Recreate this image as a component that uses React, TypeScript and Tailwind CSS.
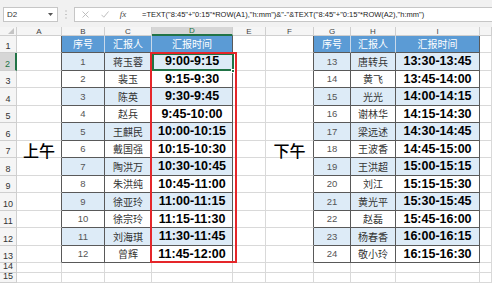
import React from "react";

const left: [string, string, string][] = [
  ["1", "蒋玉蓉", "9:00-9:15"],
  ["2", "裴玉", "9:15-9:30"],
  ["3", "陈英", "9:30-9:45"],
  ["4", "赵兵", "9:45-10:00"],
  ["5", "王麒民", "10:00-10:15"],
  ["6", "戴国强", "10:15-10:30"],
  ["7", "陶洪万", "10:30-10:45"],
  ["8", "朱洪纯", "10:45-11:00"],
  ["9", "徐亚玲", "11:00-11:15"],
  ["10", "徐宗玲", "11:15-11:30"],
  ["11", "刘海琪", "11:30-11:45"],
  ["12", "曾辉", "11:45-12:00"],
];

const right: [string, string, string][] = [
  ["13", "唐转兵", "13:30-13:45"],
  ["14", "黄飞", "13:45-14:00"],
  ["15", "光光", "14:00-14:15"],
  ["16", "谢林华", "14:15-14:30"],
  ["17", "梁远述", "14:30-14:45"],
  ["18", "王波香", "14:45-15:00"],
  ["19", "王洪超", "15:00-15:15"],
  ["20", "刘江", "15:15-15:30"],
  ["21", "黄光平", "15:30-15:45"],
  ["22", "赵磊", "15:45-16:00"],
  ["23", "杨春香", "16:00-16:15"],
  ["24", "敬小玲", "16:15-16:30"],
];

const COLS = ["A", "B", "C", "D", "E", "F", "G", "H", "I", "J"];

const cjk = "font-['Noto_Sans_CJK_SC',sans-serif]";

function Toolbar() {
  return (
    <div className="h-[27px] bg-[#f1f1f1] flex items-start pt-[7px]">
      <div className="ml-[3px] w-[55px] h-[15px] bg-white border border-[#c6c6c6] flex items-center pl-[3px] pr-[4px] text-[8px] text-[#333] leading-none">
        <span>D2</span>
        <svg className="ml-auto" width="5" height="3" viewBox="0 0 5 3">
          <path d="M0 0 L5 0 L2.5 3 Z" fill="#555" />
        </svg>
      </div>
      <div className="w-[16px] h-[15px] flex items-center justify-center">
        <svg width="2" height="9" viewBox="0 0 2 9">
          <rect x="0.5" y="0.5" width="1" height="1" fill="#999" />
          <rect x="0.5" y="4" width="1" height="1" fill="#999" />
          <rect x="0.5" y="7.5" width="1" height="1" fill="#999" />
        </svg>
      </div>
      <div className="flex-1 h-[15px] bg-white border-y border-l border-[#c6c6c6] flex items-center">
        <span className="w-[20px] flex justify-center">
          <svg width="7" height="7" viewBox="0 0 7 7">
            <path d="M0.5 0.5 L6.5 6.5 M6.5 0.5 L0.5 6.5" stroke="#b8b8b8" strokeWidth="0.9" />
          </svg>
        </span>
        <span className="w-[19px] flex justify-center">
          <svg width="8" height="7" viewBox="0 0 8 7">
            <path d="M0.5 3.8 L2.8 6.2 L7.5 0.5" stroke="#b8b8b8" strokeWidth="0.9" fill="none" />
          </svg>
        </span>
        <span className="w-[18px] flex justify-center font-['Liberation_Serif',serif] italic text-[9px] text-[#444] leading-none">
          fx
        </span>
        <span className="ml-[10px] text-[7.5px] text-[#222] leading-none whitespace-nowrap">
          {'=TEXT("8:45"+"0:15"*ROW(A1),"h:mm")&"-"&TEXT("8:45"+"0:15"*ROW(A2),"h:mm")'}
        </span>
      </div>
    </div>
  );
}

function Sheet() {
  const cells: React.ReactNode[] = [];

  cells.push(
    <div key="corner" className="bg-[#f5f5f5] border-r border-b border-[#cfcfcf] flex items-end justify-end pr-[2px] pb-[1px]">
      <svg width="6" height="6" viewBox="0 0 6 6">
        <path d="M6 0 L6 6 L0 6 Z" fill="#c4c4c4" />
      </svg>
    </div>
  );
  COLS.forEach((c) => {
    const sel = c === "D";
    cells.push(
      <div
        key={"h" + c}
        className={
          sel
            ? "bg-[#d6d6d6] border-r border-[#cfcfcf] border-b-2 border-b-[#217346] text-[#217346] text-[8px] leading-none flex items-center justify-center pt-[1px]"
            : "bg-[#f5f5f5] border-r border-b border-[#cfcfcf] text-[#444] text-[8px] leading-none flex items-center justify-center pt-[1px]"
        }
      >
        {c === "J" ? "" : c}
      </div>
    );
  });

  for (let r = 1; r <= 15; r++) {
    const sel = r === 2;
    cells.push(
      <div
        key={"rh" + r}
        className={
          sel
            ? "bg-[#d6d6d6] border-b border-[#cfcfcf] border-r-2 border-r-[#217346] text-[#217346] text-[9px] leading-none flex items-end justify-center pb-[1px]"
            : "bg-[#f5f5f5] border-r border-b border-[#cfcfcf] text-[#333] text-[9px] leading-none flex items-end justify-center pb-[1px]"
        }
      >
        {r}
      </div>
    );

    const inTable = r >= 1 && r <= 13;
    const gridCell = "border-r border-b border-[#d9d9d9] flex items-center justify-center whitespace-nowrap overflow-visible";
    const beforeTable = "border-r border-b border-[#d9d9d9] border-r-[#595959] flex items-center justify-center whitespace-nowrap overflow-visible";

    cells.push(
      <div key={"A" + r} className={inTable ? beforeTable : gridCell}>
        {r === 7 ? <span className={cjk + " text-[16px] font-medium text-black leading-none mt-[2px]"}>上午</span> : null}
      </div>
    );

    const table = (data: [string, string, string][], side: string) => {
      const out: React.ReactNode[] = [];
      if (r === 1) {
        const hs = ["序号", "汇报人", "汇报时间"];
        hs.forEach((h, i) => {
          out.push(
            <div
              key={side + "hd" + i}
              className={
                i === 2
                  ? cjk + " bg-[#5b9bd5] text-white text-[10px] leading-none flex items-center justify-center border-r border-b border-[#595959]"
                  : cjk + " bg-[#5b9bd5] text-white text-[10px] leading-none flex items-center justify-center border-r border-b border-[#595959] border-r-[#c9d9ea]"
              }
            >
              {h}
            </div>
          );
        });
      } else if (r <= 13) {
        const row = data[r - 2];
        const stripe = r % 2 === 0;
        const bg = stripe ? "bg-[#ddebf7]" : "bg-white";
        out.push(
          <div key={side + "n" + r} className={bg + " border-r border-b border-[#595959] flex items-center justify-center text-[9.5px] text-[#555] leading-none"}>
            {row[0]}
          </div>
        );
        out.push(
          <div key={side + "m" + r} className={bg + " " + cjk + " border-r border-b border-[#595959] flex items-center justify-center text-[10px] text-[#333] leading-none"}>
            {row[1]}
          </div>
        );
        out.push(
          <div key={side + "t" + r} className={bg + " border-r border-b border-[#595959] flex items-center justify-center text-[12.5px] font-bold text-black leading-none whitespace-nowrap"}>
            {row[2]}
          </div>
        );
      } else {
        out.push(<div key={side + "e1" + r} className={gridCell} />);
        out.push(<div key={side + "e2" + r} className={gridCell} />);
        out.push(<div key={side + "e3" + r} className={gridCell} />);
      }
      return out;
    };

    cells.push(...table(left, "L"));
    cells.push(<div key={"E" + r} className={gridCell} />);
    cells.push(
      <div key={"F" + r} className={inTable ? beforeTable : gridCell}>
        {r === 7 ? <span className={cjk + " text-[16px] font-medium text-black leading-none mt-[2px]"}>下午</span> : null}
      </div>
    );
    cells.push(...table(right, "R"));
    cells.push(<div key={"J" + r} className={gridCell} />);
  }

  return (
    <div className="relative">
      <div className="grid grid-cols-[17px_45px_43px_47px_81px_33px_48px_37px_45px_84px_1fr] grid-rows-[9px_17px_18px_17px_18px_17px_18px_17px_18px_17px_18px_17px_18px_17px_10px_10px]">
        {cells}
      </div>
      <div className="absolute left-[152px] top-[26px] w-[82px] h-[18px] border-2 border-[#217346] pointer-events-none" />
      <div className="absolute left-[231px] top-[42px] w-[4px] h-[4px] bg-[#217346] border border-white pointer-events-none" />
      <div className="absolute left-[150px] top-[25px] w-[87px] h-[211px] border-2 border-[#e5262a] pointer-events-none" />
    </div>
  );
}

export default function App() {
  return (
    <div className="w-[492px] h-[283px] overflow-hidden bg-white font-['Liberation_Sans',Arial,sans-serif]">
      <Toolbar />
      <Sheet />
    </div>
  );
}
